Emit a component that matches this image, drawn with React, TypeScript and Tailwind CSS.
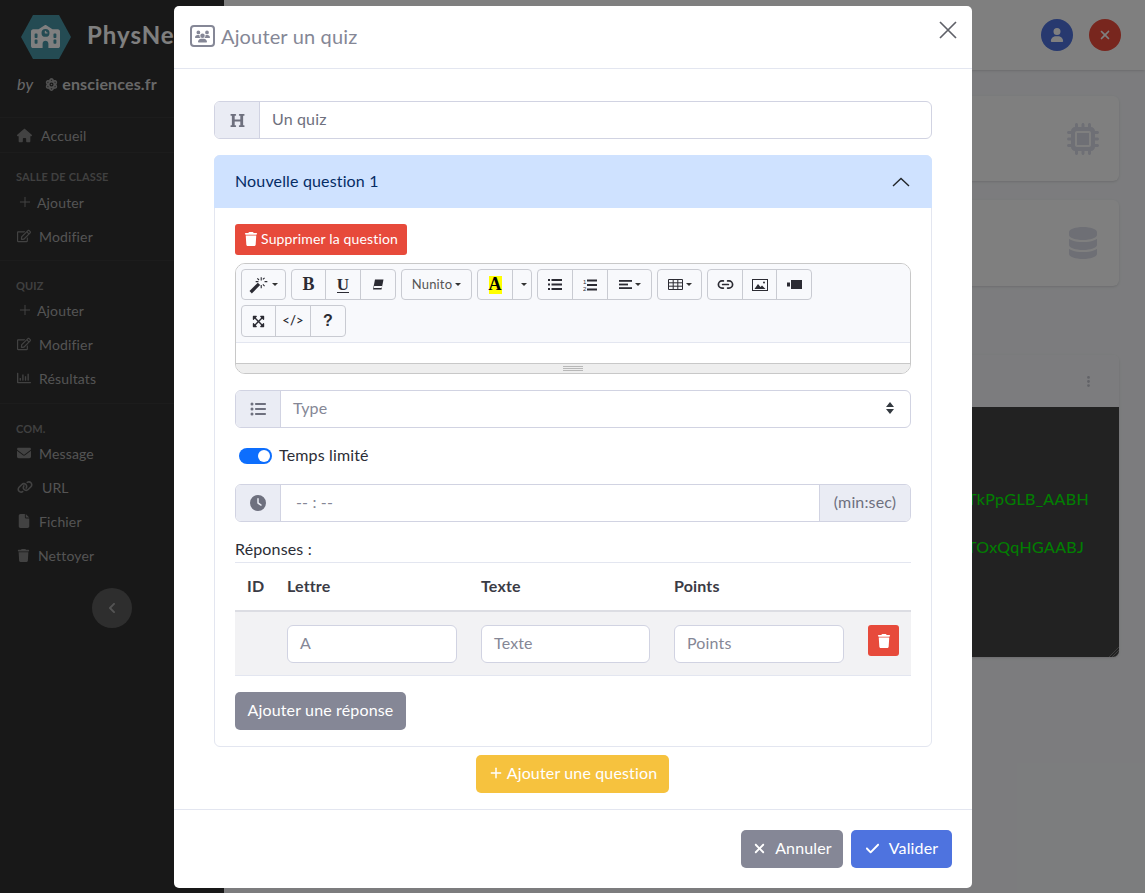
import type { ReactNode } from 'react';
import { Link2, Plus } from 'lucide-react';
import { FaChevronLeft, FaExpandArrowsAlt, FaHeading, FaRegChartBar, FaRegEdit } from 'react-icons/fa';
import {
  FaAtom,
  FaCheck,
  FaClock,
  FaDatabase,
  FaEllipsisVertical,
  FaEnvelope,
  FaFile,
  FaHouse,
  FaLink,
  FaListUl,
  FaMicrochip,
  FaSchool,
  FaTrash,
  FaUser,
  FaUsers,
  FaXmark,
} from 'react-icons/fa6';

function Caret() {
  return <span className="ml-[3px] inline-block h-0 w-0 border-x-[3px] border-t-[3px] border-x-transparent border-t-[#333]" />;
}

function NavRow({ icon, label, gap }: { icon: ReactNode; label: string; gap: string }) {
  return (
    <div className={`flex h-[34px] items-center pl-[17px] text-[14px] text-[#a8a8a8] ${gap}`}>
      <span className="text-[#858585]">{icon}</span>
      {label}
    </div>
  );
}

function SectionTitle({ label, spacing }: { label: string; spacing: string }) {
  return <div className={`pl-[16px] text-[11px] leading-[12px] font-bold text-[#808080] uppercase ${spacing}`}>{label}</div>;
}

function Sidebar() {
  return (
    <aside className="flex h-[893px] w-[224px] shrink-0 flex-col bg-[#303030]">
      <div className="h-[118px] border-b border-[#383838]">
        <div className="flex h-[72px] items-center pl-[21px] pt-[1px]">
          <svg width="50" height="44" viewBox="0 0 50 44" className="shrink-0">
            <polygon points="0,22 12,0 38,0 50,22 38,44 12,44" fill="#4fb0c6" opacity="0.8" />
          </svg>
          <FaSchool className="ml-[-40px] mr-[27px] text-[29px] text-white" />
          <span className="mt-[-4px] text-[24px] font-bold tracking-[1px] text-white">PhysNet</span>
        </div>
        <div className="flex items-center pl-[17px] text-[#d0d0d0]">
          <span className="mr-[12px] text-[16px] italic">by</span>
          <FaAtom className="mr-[4px] text-[13px] text-[#a0a0a0]" />
          <span className="text-[16px] font-bold">ensciences.fr</span>
        </div>
      </div>
      <div className="border-b border-[#383838]">
        <NavRow icon={<FaHouse className="text-[15px]" />} label="Accueil" gap="gap-[9px]" />
      </div>
      <div className="border-b border-[#383838] pb-[7px]">
        <SectionTitle label="Salle de classe" spacing="pt-[18px] pb-[2px]" />
        <NavRow icon={<Plus size={16} strokeWidth={1.5} />} label="Ajouter" gap="gap-[4px]" />
        <NavRow icon={<FaRegEdit className="text-[14px]" />} label="Modifier" gap="gap-[8px]" />
      </div>
      <div className="border-b border-[#383838] pb-[8px]">
        <SectionTitle label="Quiz" spacing="pt-[19px] pb-[1px]" />
        <NavRow icon={<Plus size={16} strokeWidth={1.5} />} label="Ajouter" gap="gap-[4px]" />
        <NavRow icon={<FaRegEdit className="text-[14px]" />} label="Modifier" gap="gap-[8px]" />
        <NavRow icon={<FaRegChartBar className="text-[14px]" />} label="Résultats" gap="gap-[8px]" />
      </div>
      <div className="pb-[16px]">
        <SectionTitle label="Com." spacing="pt-[19px] pb-[1px]" />
        <NavRow icon={<FaEnvelope className="text-[14px]" />} label="Message" gap="gap-[8px]" />
        <NavRow icon={<FaLink className="text-[16px]" />} label="URL" gap="gap-[9px]" />
        <NavRow icon={<FaFile className="text-[14px]" />} label="Fichier" gap="gap-[8px]" />
        <NavRow icon={<FaTrash className="text-[13px]" />} label="Nettoyer" gap="gap-[8px]" />
      </div>
      <div className="ml-[92px] flex h-[40px] w-[40px] items-center justify-center rounded-full bg-[#5c5c5c]">
        <FaChevronLeft className="text-[12px] text-[#a8a8a8]" />
      </div>
    </aside>
  );
}

function BackgroundPage() {
  return (
    <div className="flex h-[893px] overflow-hidden bg-[#f8f9fc]">
      <Sidebar />
      <main className="flex min-w-0 flex-1 flex-col">
        <header className="flex h-[70px] shrink-0 items-center justify-end gap-[16px] bg-white pr-[24px] shadow">
          <span className="flex h-[32px] w-[32px] items-center justify-center rounded-full bg-[#4e73df] text-[14px] text-white">
            <FaUser />
          </span>
          <span className="flex h-[32px] w-[32px] items-center justify-center rounded-full bg-[#f04c3c] text-[14px] text-white">
            <FaXmark />
          </span>
        </header>
        <div className="flex flex-col pl-[24px] pr-[26px] pt-[26px]">
          <div className="flex h-[85px] items-center justify-end rounded-[6px] bg-white pr-[20px] shadow">
            <FaMicrochip className="text-[32px] text-[#dddfeb]" />
          </div>
          <div className="mt-[19px] flex h-[86px] items-center justify-end rounded-[6px] bg-white pr-[20px] shadow">
            <FaDatabase className="text-[32px] text-[#dddfeb]" />
          </div>
          <div className="mt-[69px] h-[302px] overflow-hidden rounded-[6px] bg-white shadow">
            <div className="flex h-[52px] items-center justify-end bg-[#f8f9fc] pr-[24px]">
              <FaEllipsisVertical className="text-[13px] text-[#c5c6cf]" />
            </div>
            <div className="relative flex h-[250px] flex-col items-end bg-[#444444] pr-[30px] pt-[81px] text-[16px] leading-[22px] tracking-[0.35px] text-[#00ff00]">
              <div>TkPpGLB_AABH</div>
              <div className="mt-[26px] pr-[5px]">TOxQqHGAABJ</div>
              <svg width="10" height="10" viewBox="0 0 10 10" className="absolute right-0 bottom-0">
                <path d="M0 10 L10 0 M3 10 L10 3 M6 10 L10 6 M9 10 L10 9" stroke="#8a8a8a" strokeWidth="0.8" />
              </svg>
            </div>
          </div>
        </div>
      </main>
    </div>
  );
}

function ToolGroup({ children }: { children: ReactNode }) {
  return <div className="flex divide-x divide-[#c9cbd2] rounded-[4px] border border-[#c9cbd2]">{children}</div>;
}

function ToolBtn({ children, className }: { children: ReactNode; className: string }) {
  return <div className={`flex items-center justify-center text-[#2b2b33] ${className}`}>{children}</div>;
}

function Toolbar() {
  return (
    <div className="flex flex-col gap-[5px] border-b border-[#e3e6f0] bg-[#f8f9fc] px-[5px] pt-[5px] pb-[5px]">
      <div className="flex h-[31px] gap-[5px]">
        <ToolGroup>
          <ToolBtn className="w-[43px]">
            <svg width="20" height="18" viewBox="0 0 18 16">
              <path d="M1.5 14.5 L9 7" stroke="#2b2b33" strokeWidth="3" />
              <path d="M11 1v3M11 8v3M6 5h2.5M14 5h2.5M7.5 2l1.5 1.5M14 1.5l-1.5 1.5M14 9l-1.5-1.5" stroke="#2b2b33" strokeWidth="1" />
            </svg>
            <Caret />
          </ToolBtn>
        </ToolGroup>
        <ToolGroup>
          <ToolBtn className="w-[34px] font-['Liberation_Serif',serif] text-[18px] font-bold">B</ToolBtn>
          <ToolBtn className="w-[35px] font-['Liberation_Serif',serif] text-[17px] font-bold">
            <span className="border-b-[1.5px] border-[#2b2b33] leading-[15px]">U</span>
          </ToolBtn>
          <ToolBtn className="w-[34px]">
            <svg width="12" height="11" viewBox="0 0 12 11">
              <path d="M3 0.5 H11.5 L9.5 10.5 H1 Z" fill="#2b2b33" />
              <path d="M2.2 7 H10.2 L9.6 9 H1.8 Z" fill="#f8f9fc" />
            </svg>
          </ToolBtn>
        </ToolGroup>
        <ToolGroup>
          <ToolBtn className="w-[69px] text-[13px] text-[#555]">
            Nunito
            <Caret />
          </ToolBtn>
        </ToolGroup>
        <ToolGroup>
          <ToolBtn className="w-[35px]">
            <span className="flex h-[18px] w-[13px] items-center justify-center bg-[#ffff00] font-['Liberation_Serif',serif] text-[18px] font-bold text-black">
              A
            </span>
          </ToolBtn>
          <ToolBtn className="w-[18px]"><Caret /></ToolBtn>
        </ToolGroup>
        <ToolGroup>
          <ToolBtn className="w-[35px]">
            <svg width="14" height="11" viewBox="0 0 14 11" fill="#2b2b33">
              <rect x="0" y="0" width="2" height="2" />
              <rect x="0" y="4.5" width="2" height="2" />
              <rect x="0" y="9" width="2" height="2" />
              <rect x="3.5" y="0" width="10.5" height="2" />
              <rect x="3.5" y="4.5" width="10.5" height="2" />
              <rect x="3.5" y="9" width="10.5" height="2" />
            </svg>
          </ToolBtn>
          <ToolBtn className="w-[35px]">
            <svg width="14" height="12" viewBox="0 0 14 12" fill="#2b2b33">
              <text x="0" y="5" fontSize="6" fontFamily="Liberation Sans">1</text>
              <text x="0" y="12" fontSize="6" fontFamily="Liberation Sans">2</text>
              <rect x="4" y="0.5" width="10" height="2" />
              <rect x="4" y="5" width="10" height="2" />
              <rect x="4" y="9.5" width="10" height="2" />
            </svg>
          </ToolBtn>
          <ToolBtn className="w-[43px]">
            <svg width="13" height="9" viewBox="0 0 13 9" fill="#2b2b33">
              <rect width="13" height="1.8" />
              <rect y="3.6" width="9" height="1.8" />
              <rect y="7.2" width="13" height="1.8" />
            </svg>
            <Caret />
          </ToolBtn>
        </ToolGroup>
        <ToolGroup>
          <ToolBtn className="w-[43px]">
            <svg width="15" height="11" viewBox="0 0 15 11" fill="none" stroke="#2b2b33" strokeWidth="1">
              <path d="M.5.5h14v10H.5zM.5 3.8h14M.5 7.2h14M5.2.5v10M9.8.5v10" />
            </svg>
            <Caret />
          </ToolBtn>
        </ToolGroup>
        <ToolGroup>
          <ToolBtn className="w-[35px]"><Link2 size={17} strokeWidth={2.4} /></ToolBtn>
          <ToolBtn className="w-[34px]">
            <svg width="16" height="12" viewBox="0 0 16 12">
              <rect x=".5" y=".5" width="15" height="11" fill="none" stroke="#2b2b33" />
              <path d="M2.5 10 L6 5 L8.5 8 L10 6.5 L13.5 10 Z" fill="#2b2b33" />
              <circle cx="12" cy="3.5" r="1" fill="#2b2b33" />
            </svg>
          </ToolBtn>
          <ToolBtn className="w-[34px]">
            <svg width="15" height="9" viewBox="0 0 15 9" fill="#2b2b33">
              <rect x="4" width="11" height="9" />
              <rect y="2.5" width="3" height="4" />
            </svg>
          </ToolBtn>
        </ToolGroup>
      </div>
      <div className="flex h-[32px]">
        <ToolGroup>
          <ToolBtn className="w-[34px] text-[13px]"><FaExpandArrowsAlt /></ToolBtn>
          <ToolBtn className="w-[35px] text-[13px] font-semibold">&lt;/&gt;</ToolBtn>
          <ToolBtn className="w-[34px] font-['Liberation_Sans',sans-serif] text-[16px] font-bold">?</ToolBtn>
        </ToolGroup>
      </div>
    </div>
  );
}

function Editor() {
  return (
    <div className="mt-[8px] flex h-[111px] flex-col overflow-hidden rounded-[10px] border border-[#c8c8c8]">
      <Toolbar />
      <div className="h-[20px] bg-white" />
      <div className="flex h-[10px] flex-col items-center justify-center gap-[1px] border-t border-[#c8c8c8] bg-[#eeeeee]">
        <span className="h-px w-[20px] bg-[#b8b8b8]" />
        <span className="h-px w-[20px] bg-[#b8b8b8]" />
        <span className="h-px w-[20px] bg-[#b8b8b8]" />
      </div>
    </div>
  );
}

function AnswerInput({ placeholder }: { placeholder: string }) {
  return (
    <div className="flex h-[38px] items-center rounded-[6px] border border-[#d1d3e2] bg-white px-[12px] pb-[2px] text-[16px] text-[#858796]">
      {placeholder}
    </div>
  );
}

function Modal() {
  return (
    <div className="absolute top-[6px] left-[174px] flex h-[882px] w-[798px] flex-col rounded-[5px] bg-white">
      <div className="flex h-[63px] shrink-0 items-center border-b border-[#e3e6f0] pb-[2px] pl-[16px] pr-[15px]">
        <span className="mr-[6px] flex h-[22px] w-[25px] items-center justify-center rounded-[4px] border-[2.5px] border-[#858796] text-[15px] text-[#858796]">
          <FaUsers />
        </span>
        <span className="text-[20px] text-[#858796]">Ajouter un quiz</span>
        <svg width="18" height="18" viewBox="0 0 18 18" className="mt-[-13px] ml-auto">
          <path d="M1 1 L17 17 M17 1 L1 17" stroke="#5f6168" strokeWidth="1.7" />
        </svg>
      </div>

      <div className="flex-1 px-[40px] pt-[32px]">
        <div className="flex h-[38px] rounded-[6px] border border-[#d1d3e2] text-[16px]">
          <span className="flex w-[45px] items-center justify-center rounded-l-[5px] border-r border-[#d1d3e2] bg-[#eaecf4] text-[15px] text-[#6e707e]">
            <FaHeading />
          </span>
          <span className="flex items-center pb-[2px] pl-[12px] text-[#6e707e]">Un quiz</span>
        </div>

        <div className="mt-[16px] h-[592px] rounded-[6px] border border-[#e3e6f0]">
          <div className="mx-[-1px] mt-[-1px] flex h-[53px] items-center justify-between rounded-t-[6px] bg-[#cfe2ff] pb-[2px] pl-[21px] pr-[22px] text-[16px] text-[#052c65]">
            Nouvelle question 1
            <svg width="18" height="10" viewBox="0 0 18 10" className="mt-[2px]">
              <path d="M1 9 L9 1.5 L17 9" stroke="#212529" strokeWidth="1.4" fill="none" />
            </svg>
          </div>

          <div className="px-[20px] pt-[16px]">
            <div className="flex h-[31px] w-[172px] items-center justify-center gap-[3px] rounded-[3px] bg-[#e74a3b] pb-[2px] text-[14px] text-white">
              <FaTrash className="text-[14px]" />
              Supprimer la question
            </div>

            <Editor />

            <div className="mt-[16px] flex h-[38px] rounded-[6px] border border-[#d1d3e2] text-[16px]">
              <span className="flex w-[45px] items-center justify-center rounded-l-[5px] border-r border-[#d1d3e2] bg-[#eaecf4] text-[16px] text-[#6e707e]">
                <FaListUl />
              </span>
              <span className="flex flex-1 items-center justify-between pb-[2px] pl-[12px] pr-[16px] text-[#858796]">
                Type
                <svg width="8" height="12" viewBox="0 0 8 12">
                  <path d="M4 0 L8 5 H0 Z M0 7 H8 L4 12 Z" fill="#343a40" />
                </svg>
              </span>
            </div>

            <div className="mt-[20px] flex h-[16px] items-center pl-[4px] text-[16px] text-[#2b2d36]">
              <span className="mr-[7px] flex h-[16px] w-[33px] items-center justify-end rounded-full bg-[#0d6efd] pr-[2px]">
                <span className="h-[12px] w-[12px] rounded-full bg-white" />
              </span>
              <span className="mt-[-2px]">Temps limité</span>
            </div>

            <div className="mt-[20px] flex h-[38px] rounded-[6px] border border-[#d1d3e2] text-[16px]">
              <span className="flex w-[45px] items-center justify-center rounded-l-[5px] border-r border-[#d1d3e2] bg-[#eaecf4] text-[16px] text-[#6e707e]">
                <FaClock />
              </span>
              <span className="flex flex-1 items-center pb-[2px] pl-[15px] text-[#858796]">-- : --</span>
              <span className="flex w-[91px] items-center justify-center rounded-r-[5px] border-l border-[#d1d3e2] bg-[#eaecf4] pb-[2px] text-[#6e707e]">
                (min:sec)
              </span>
            </div>

            <div className="mt-[17px] h-[24px] border-b border-[#e3e6f0] text-[16px] leading-[20px] text-[#2b2d36]">Réponses :</div>

            <div className="grid h-[49px] grid-cols-[40px_194px_193px_194px_55px] items-center border-b-2 border-[#dcdde3] pb-[2px] text-[16px] font-bold text-[#3a3b45]">
              <span className="pl-[12px]">ID</span>
              <span className="pl-[12px]">Lettre</span>
              <span className="pl-[12px]">Texte</span>
              <span className="pl-[12px]">Points</span>
              <span />
            </div>
            <div className="grid h-[64px] grid-cols-[40px_194px_193px_194px_55px] border-b border-[#e3e6f0] bg-[#f2f2f4] pt-[13px]">
              <span />
              <div className="px-[12px]"><AnswerInput placeholder="A" /></div>
              <div className="px-[12px]"><AnswerInput placeholder="Texte" /></div>
              <div className="px-[12px]"><AnswerInput placeholder="Points" /></div>
              <div className="pl-[12px]">
                <span className="flex h-[31px] w-[31px] items-center justify-center rounded-[3px] bg-[#e74a3b] text-[14px] text-white">
                  <FaTrash />
                </span>
              </div>
            </div>

            <div className="mt-[16px] flex h-[38px] w-[171px] items-center justify-center rounded-[5px] bg-[#858796] pb-[2px] text-[16px] text-white">
              Ajouter une réponse
            </div>
          </div>
        </div>

        <div className="mt-[8px] flex justify-center pr-[1px]">
          <div className="flex h-[38px] w-[193px] items-center justify-center gap-[3px] rounded-[5px] bg-[#f6c23e] pb-[2px] text-[16px] text-white">
            <Plus size={16} strokeWidth={2.2} />
            Ajouter une question
          </div>
        </div>
      </div>

      <div className="flex h-[79px] shrink-0 justify-end gap-[8px] border-t border-[#e3e6f0] pt-[20px] pr-[20px]">
        <div className="flex h-[38px] w-[102px] items-center justify-center gap-[8px] rounded-[5px] bg-[#858796] pb-[2px] text-[16px] text-white">
          <FaXmark className="text-[15px]" />
          Annuler
        </div>
        <div className="flex h-[38px] w-[101px] items-center justify-center gap-[9px] rounded-[5px] bg-[#4e73df] pb-[2px] text-[16px] text-white">
          <FaCheck className="text-[15px]" />
          Valider
        </div>
      </div>
    </div>
  );
}

export default function App() {
  return (
    <div className="relative h-[893px] overflow-hidden font-['Lato',sans-serif] tracking-[0.15px]">
      <BackgroundPage />
      <div className="absolute inset-0 bg-black/50" />
      <Modal />
    </div>
  );
}
